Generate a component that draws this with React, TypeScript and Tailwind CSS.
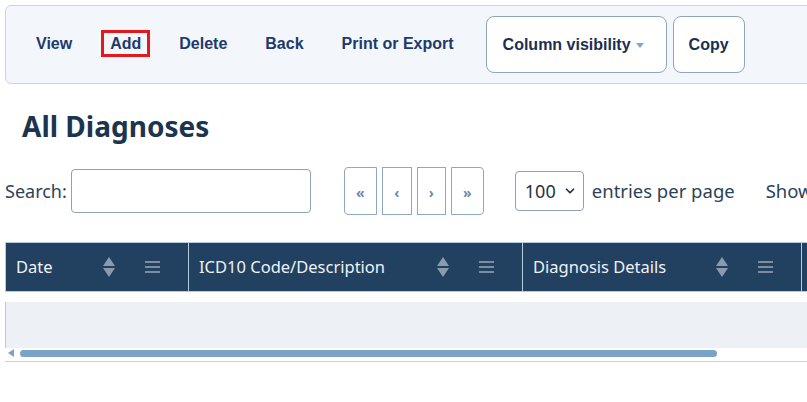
import { ChevronDown } from 'lucide-react'

const sans = "font-['Noto_Sans',sans-serif]"
const arial = "font-['Liberation_Sans',Arial,sans-serif]"

const columns = [
  { label: 'Date', width: 'w-[183px]' },
  { label: 'ICD10 Code/Description', width: 'w-[334px]' },
  { label: 'Diagnosis Details', width: 'w-[279px]' },
  { label: 'Notes', width: 'w-[200px]' },
]

function SortIcon() {
  return (
    <svg width="12" height="20" viewBox="0 0 12 20" className="fill-[#8a9bb0]">
      <path d="M6 0 L12 9 L0 9 Z" />
      <path d="M0 11 L12 11 L6 20 Z" />
    </svg>
  )
}

function MenuIcon() {
  return (
    <svg width="15" height="12" viewBox="0 0 15 12" className="fill-[#7d8da0]">
      <rect x="0" y="0" width="15" height="2" />
      <rect x="0" y="5" width="15" height="2" />
      <rect x="0" y="10" width="15" height="2" />
    </svg>
  )
}

function Toolbar() {
  return (
    <div className={`flex h-[79px] w-[1000px] items-center rounded-md border border-[#c8d5e5] bg-[#f3f6fb] pb-[2px] pl-[11px] ${arial} text-[16px] font-bold text-[#1d3a6d]`}>
      <a className="px-[19px]">View</a>
      <a className="px-[10px]">
        <span className="block border-[3px] border-[#e3191d] px-[6px] py-[3px] leading-[15px]">Add</span>
      </a>
      <a className="px-[19px]">Delete</a>
      <a className="px-[19px]">Back</a>
      <a className="px-[19px]">Print or Export</a>
      <button className="ml-[13px] mt-[2px] flex h-[57px] w-[181px] items-center rounded-lg border border-[#8fa5bd] bg-white pl-[16px] text-[#1b2f4e]">
        Column visibility
        <span className="ml-[5px] mt-[1px] h-0 w-0 border-x-[4px] border-t-[5px] border-x-transparent border-t-[#7fa6cc]" />
      </button>
      <button className="ml-[6px] mt-[2px] flex h-[57px] w-[72px] items-center justify-center rounded-lg border border-[#8fa5bd] bg-white text-[#1b2f4e]">
        Copy
      </button>
    </div>
  )
}

function Pager() {
  const items = [
    { glyph: '«', w: 'w-[33px]', round: 'rounded-l' },
    { glyph: '‹', w: 'w-[30px]', round: '' },
    { glyph: '›', w: 'w-[29px]', round: '' },
    { glyph: '»', w: 'w-[33px]', round: 'rounded-r' },
  ]
  return (
    <div className="ml-[33px] flex gap-[5px]">
      {items.map((it) => (
        <button
          key={it.glyph}
          className={`flex h-[48px] ${it.w} ${it.round} items-center justify-center border border-[#8fa8c2] bg-white pt-[2px] text-[14px] font-bold text-[#6a8bb0]`}
        >
          {it.glyph}
        </button>
      ))}
    </div>
  )
}

export default function App() {
  return (
    <div className={`h-[402px] w-[807px] overflow-hidden bg-white p-[5px] ${sans}`}>
      <Toolbar />

      <h1 className="ml-[17px] mt-[24px] text-[28px] font-bold leading-[36px] text-[#1b3550]">All Diagnoses</h1>

      <div className="mt-[23px] flex w-[1000px] items-center text-[18px] text-[#2c4259]">
        <label>Search:</label>
        <input className="ml-[4px] h-[44px] w-[240px] rounded border border-[#8da2b9] bg-white" />
        <Pager />
        <div className="ml-[31px] flex h-[40px] w-[69px] items-center justify-between rounded border border-[#8da2b9] pl-[9px] pr-[6px] text-[#1f3347]">
          100
          <ChevronDown size={14} strokeWidth={3} className="text-[#1f3347]" />
        </div>
        <span className="ml-[8px] text-[18.5px]">entries per page</span>
        <span className="ml-[31px] text-[18.5px]">Showing</span>
      </div>

      <div className="mt-[27px] w-[1000px]">
        <div className="flex h-[50px] border-y border-l border-[#b8cce0] bg-[#22405f] text-[16.5px] text-[#eef2f7]">
          {columns.map((c) => (
            <div key={c.label} className={`flex ${c.width} shrink-0 items-center border-r border-[#b8cce0] pl-[10px]`}>
              <span className="flex-1">{c.label}</span>
              <span className="mr-[30px]"><SortIcon /></span>
              <span className="mr-[28px]"><MenuIcon /></span>
            </div>
          ))}
        </div>
        <div className="mt-[10px] h-[46px] border-l border-[#b8cce0] bg-[#edf0f5]" />
        <div className="flex h-[10px] items-center pl-[3px]">
          <span className="h-0 w-0 border-y-[4px] border-r-[6px] border-y-transparent border-r-[#7ba3c8]" />
          <span className="ml-[6px] h-[7px] w-[697px] rounded-full bg-[#7ba3c8]" />
        </div>
        <div className="mt-[3px] h-px bg-[#c0d4e8]" />
      </div>
    </div>
  )
}
